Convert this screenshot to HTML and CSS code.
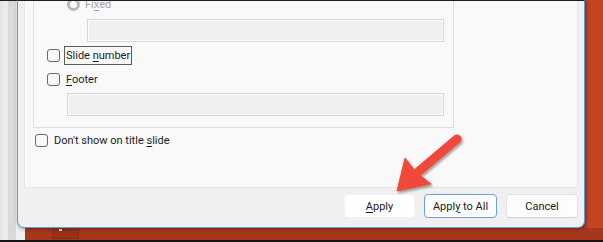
FILE: index.html
```html
<!DOCTYPE html>
<html lang="en">
<head>
    <meta charset="UTF-8">
    <meta name="viewport" content="width=device-width, initial-scale=1.0">
    <title>Header and Footer</title>
    <link rel="stylesheet" href="styles.css">
</head>
<body>

    <div class="screen">
        <div class="stage">
            <div class="slidesPane"></div>

            <div class="dialog">
                <div class="tabPage">
                    <div class="group">
                        <div class="optRow radioRow">
                            <span class="radio"></span>
                            <span class="label disabled">Fi<u>x</u>ed</span>
                        </div>
                        <div class="field fixedField"></div>

                        <div class="optRow">
                            <span class="check"></span>
                            <span class="label focused">Slide <u>n</u>umber</span>
                        </div>
                        <div class="optRow footerRow">
                            <span class="check"></span>
                            <span class="label"><u>F</u>ooter</span>
                        </div>
                        <div class="field footerField"></div>
                    </div>

                    <div class="optRow titleRow">
                        <span class="check"></span>
                        <span class="label">Don't show on title <u>s</u>lide</span>
                    </div>
                </div>

                <div class="buttonBar">
                    <button class="btn btnApply"><u>A</u>pply</button>
                    <button class="btn btnAll default">Appl<u>y</u> to All</button>
                    <button class="btn btnCancel">Cancel</button>
                </div>
            </div>

            <div class="pptEdge"></div>
        </div>

        <div class="statusBand">
            <span class="thumb"></span>
        </div>

        <!-- callout arrow drawn over the dialog -->
        <svg class="calloutArrow" width="603" height="242" viewBox="0 0 603 242">
            <defs>
                <filter id="arrowShadow" x="-20%" y="-20%" width="140%" height="140%">
                    <feDropShadow dx="1.5" dy="2" stdDeviation="1.2" flood-color="#000" flood-opacity="0.35"/>
                </filter>
            </defs>
            <g filter="url(#arrowShadow)" fill="#f0493b" stroke="#f0493b">
                <line x1="457" y1="139" x2="418" y2="172" stroke-width="9" stroke-linecap="round"/>
                <polygon points="397,191 405,158 416,172 431,184" stroke-width="1" stroke-linejoin="round"/>
            </g>
        </svg>
    </div>

</body>
</html>
```

FILE: styles.css
```css
*{
    box-sizing: border-box;
}

body{
    margin: 0;
    font-family: Roboto, "Noto Sans", sans-serif;
}

.screen{
    position: relative;
    width: 603px;
    height: 242px;
    overflow: hidden;
    display: flex;
    flex-direction: column;
    background: linear-gradient(to right, #e4e4e4 0 3px, #ececec 3px 8px, #d9d9d9 8px 16px, #efefef 16px 25px, #a6371c 25px);
}

.stage{
    display: flex;
    height: 228px;
}

.slidesPane{
    width: 17px;
    border-top: 1px solid #1d1d1d;
}

.dialog{
    width: 568px;
    background-color: #f0f0f0;
    border: 1px solid #5f9bd8;
    border-top: 1px solid #1d1d1d;
    border-radius: 0 0 7px 7px;
    box-shadow: 1px 1px 4px rgba(0, 0, 0, 0.35);
    display: flex;
    flex-direction: column;
    position: relative;
}

.tabPage{
    height: 187px;
    margin: 0 6px;
    background-color: #f9f9f9;
    border: 1px solid #e6e6e6;
    border-top: none;
    overflow: hidden;
}

.group{
    width: 421px;
    margin: -13px 0 0 8px;
    padding: 7px 9px 11px 13px;
    border: 1px solid #dedede;
    display: flex;
    flex-direction: column;
}

.optRow{
    display: flex;
    align-items: center;
    height: 19px;
}

.radioRow{
    height: 16px;
    padding-left: 20px;
}

.footerRow{
    margin-top: 5px;
}

.titleRow{
    height: 13px;
    margin: 6px 0 0 10px;
}

.group .optRow + .optRow{
    margin-top: 5px;
}

.fixedField + .optRow{
    margin-top: 4px;
}

.radio{
    width: 13px;
    height: 13px;
    border-radius: 50%;
    border: 3px solid #b8b8b8;
    background-color: #fdfdfd;
    flex-shrink: 0;
}

.check{
    width: 13px;
    height: 13px;
    border: 1px solid #6b6b6b;
    border-radius: 3px;
    background-color: #f8f8f8;
    flex-shrink: 0;
}

.label{
    margin-left: 4px;
    padding: 0 1px;
    border: 1px solid transparent;
    font-size: 11px;
    line-height: 17px;
    color: #1c1c1c;
    white-space: nowrap;
}

.label u{
    text-underline-offset: 2px;
}

.label.disabled{
    margin-left: 3px;
    color: #a3a3a3;
}

.label.focused{
    border-color: #5c5c5c;
}

.field{
    height: 23px;
    border: 1px solid #d6d6d6;
    background-color: #f0f0f0;
    box-shadow: inset 0 0 0 1px #fbfbfb;
}

.fixedField{
    margin: 7px 0 0 40px;
}

.footerField{
    margin: 4px 0 0 20px;
}

.buttonBar{
    flex: 1;
    display: flex;
    justify-content: flex-end;
    align-items: flex-start;
    gap: 9px;
    padding: 6px 6px 0 0;
}

.btn{
    height: 24px;
    padding: 0;
    font-family: Roboto, "Noto Sans", sans-serif;
    font-size: 11px;
    color: #1b1b1b;
    background-color: #fdfdfd;
    border: 1px solid #e4e4e4;
    border-bottom-color: #d2d2d2;
    border-radius: 4px;
}

.btn u{
    text-underline-offset: 2px;
}

.btnApply{
    width: 71px;
    background-color: #ffffff;
    border-color: #f2f2f2;
}

.btnAll{
    width: 73px;
}

.btnCancel{
    width: 72px;
}

.btn.default{
    border: 1px solid #6e9fd5;
}

.pptEdge{
    flex: 1;
    background: linear-gradient(to right, #8d4f45 0, #b9462a 2px, #c4451f 5px);
}

.statusBand{
    height: 14px;
    border-bottom: 2px solid #151515;
}

.thumb{
    display: block;
    width: 27px;
    height: 10px;
    margin: 1px 0 0 52px;
    background-color: #9a3019;
    box-shadow: inset 0 0 0 1px #872914;
}

.thumb::before{
    content: "";
    display: block;
    width: 3px;
    height: 2px;
    margin-left: 7px;
    background-color: #e9dfdb;
}

.calloutArrow{
    position: absolute;
    left: 0;
    top: 0;
    pointer-events: none;
}
```
